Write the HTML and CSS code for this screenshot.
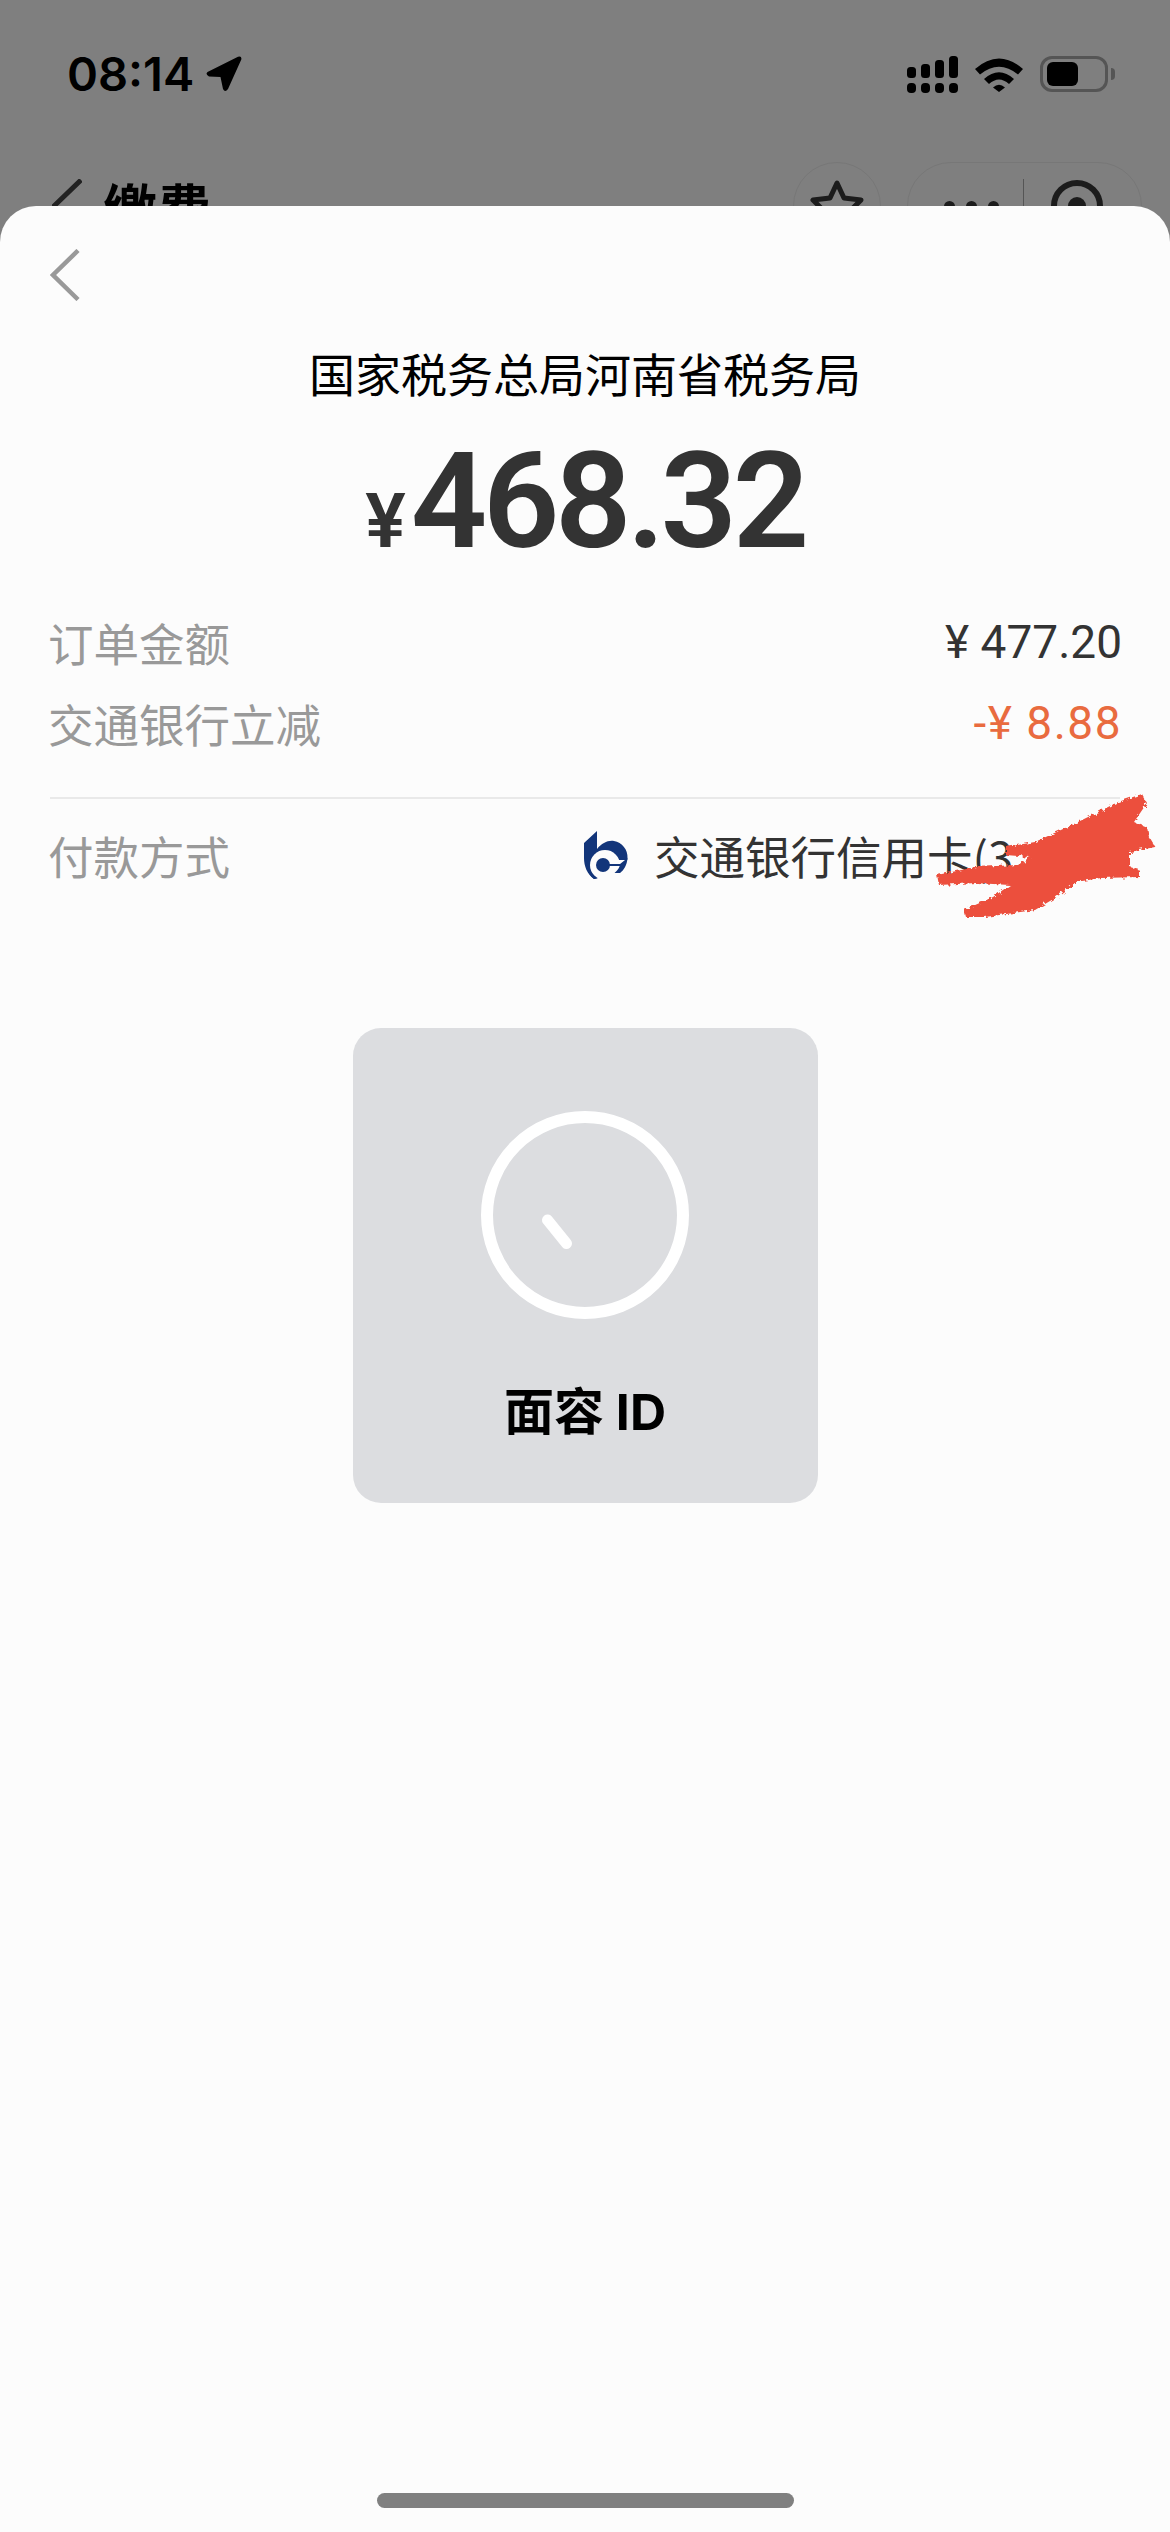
FILE: index.html

```html
<!DOCTYPE html>
<html lang="zh-CN">

<head>
  <meta charset="UTF-8" />
  <meta name="viewport" content="width=device-width, initial-scale=1" />
  <title>面容 ID 支付</title>
  <link rel="stylesheet" href="styles.css">
</head>

<body>
  <div class="phone">
    <div class="behind">
      <div class="status-bar">
        <div class="clock">
          <span class="time">08:14</span>
          <svg class="arrow" viewBox="0 0 36 36" width="36" height="36">
            <path d="M1.500 16 L32 0.800 Q36 -0.500 35.300 3.500 L22 33 Q19 37 17 33 L14.500 21 L3 20.500 Q-1 18.500 1.500 16 Z" />
          </svg>
        </div>
        <div class="status-icons">
          <svg viewBox="0 0 51 37" width="51" height="37">
            <rect x="0" y="11" width="9" height="11" rx="3.500" />
            <rect x="14" y="8" width="9" height="14" rx="3.500" />
            <rect x="28" y="4" width="9" height="18" rx="3.500" />
            <rect x="42" y="0" width="9" height="22" rx="3.500" />
            <rect x="0" y="27" width="9" height="10" rx="4" />
            <rect x="14" y="27" width="9" height="10" rx="4" />
            <rect x="28" y="27" width="9" height="10" rx="4" />
            <rect x="42" y="27" width="9" height="10" rx="4" />
          </svg>
          <svg class="wifi" viewBox="0 0 48 36" width="48" height="36">
            <path d="M0 13 Q24 -8 48 13 L43 18.500 Q24 3 5 18.500 Z" />
            <path d="M9 23 Q24 9.500 39 23 L34 28 Q24 19 14 28 Z" />
            <path d="M18 31.500 Q24 26 30 31.500 L24 36 Z" />
          </svg>
          <div class="battery">
            <div class="battery-level"></div>
          </div>
          <div class="battery-nub"></div>
        </div>
      </div>
      <div class="nav">
        <svg class="nav-back" viewBox="0 0 30 54" width="30" height="54">
          <path d="M29 1 L2 27 L29 53" />
        </svg>
        <span class="nav-title">缴费</span>
        <div class="star-btn">
          <svg viewBox="0 0 56 52" width="56" height="52">
            <path d="M28 3 L35 18 L52 20 L40 32 L44 49 L28 40 L12 49 L16 32 L4 20 L21 18 Z" />
          </svg>
        </div>
        <div class="capsule">
          <div class="dots">
            <span></span>
            <span></span>
            <span></span>
          </div>
          <div class="capsule-line"></div>
          <div class="target">
            <div class="target-dot"></div>
          </div>
        </div>
      </div>
    </div>

    <div class="sheet">
      <svg class="sheet-back" viewBox="0 0 30 52" width="30" height="52">
        <path d="M28 1.500 L3 26 L28 50.500" />
      </svg>

      <h1 class="payee">国家税务总局河南省税务局</h1>
      <div class="amount"><span class="yen">¥</span>468.32</div>

      <div class="price-rows">
        <div class="row">
          <span class="label">订单金额</span>
          <span class="value">¥ 477.20</span>
        </div>
        <div class="row">
          <span class="label">交通银行立减</span>
          <span class="value discount">-¥ 8.88</span>
        </div>
      </div>

      <div class="pay-row">
        <span class="label">付款方式</span>
        <div class="card-info">
          <svg class="bank-logo" viewBox="14 11 44 48" width="44" height="48">
            <path class="logo-blue" d="M14 23 L27 11 V29 C32 23 38 20 44 21 C52 22 58 30 57.500 38 C57 45 54 50 50 53 L24 59 C17 54 14 46 14 38 Z" />
            <circle class="logo-white" cx="35" cy="45" r="15" />
            <path class="logo-white" d="M44 40 H60 V60 H30 V58 L44 50 Z" />
            <path class="logo-blue" d="M18 47 C20 53 24 56 27 58.500 L24 59 C20 56 18 52 18 47 Z" />
            <path class="logo-blue" d="M50 44 H38 V46 H50 Z" />
            <path class="logo-blue" d="M50 44 L57.500 38 C57 45 54 50 50 53 L44.500 53 C48 50 50 47 50 44 Z" />
            <circle class="logo-blue" cx="33" cy="45" r="7" />
          </svg>
          <span class="card-name">交通银行信用卡(3</span>
        </div>
        <svg class="scribble" viewBox="0 0 226 130" width="226" height="130">
          <filter id="rough" x="-10%" y="-10%" width="120%" height="120%">
            <feTurbulence type="fractalNoise" baseFrequency="0.25" numOctaves="2" seed="4" />
            <feDisplacementMap in="SourceGraphic" scale="6" />
          </filter>
          <path filter="url(#rough)" d="M207 1 L212 10 L199 29 L212 34 L214 44 L220 54 L195 59 L195 74 L205 77 L205 84 L166 85 L141 89 L120 105 L100 117 L50 124 L31 124 L29 117 L58 104 L75 92 L41 90 L4 92 L2 82 L41 74 L83 72 L95 64 L71 62 L71 54 L100 49 L141 30 L183 9 Z" />
        </svg>
      </div>

      <div class="face-card">
        <svg class="face-ring" viewBox="0 0 208 208" width="208" height="208">
          <circle cx="104" cy="104" r="98" />
          <path d="M66.500 109 L85.500 132.500" />
        </svg>
        <div class="face-text">面容 ID</div>
      </div>

      <div class="home-bar"></div>
    </div>
  </div>
</body>

</html>
```

FILE: styles.css

```css
* {
  box-sizing: border-box;
}

body {
  margin: 0;
  background-color: #7f7f7f;
  font-family: "Noto Sans CJK SC", "Noto Sans", sans-serif;
}

.phone {
  display: flex;
  flex-direction: column;
  width: 1170px;
  height: 2532px;
  overflow: hidden;
}

/* page dimmed behind the sheet */
.behind {
  height: 206px;
  overflow: hidden;
  flex-shrink: 0;
}

.status-bar {
  display: flex;
  justify-content: space-between;
  align-items: flex-start;
  height: 162px;
  padding: 55px 55px 0 67px;
}

.clock {
  display: flex;
  align-items: center;
  gap: 12px;
  height: 38px;
}

.time {
  font-family: Inter, sans-serif;
  font-size: 47px;
  font-weight: 600;
  line-height: 38px;
  color: #000;
}

.arrow {
  fill: #000;
}

.status-icons {
  display: flex;
  align-items: center;
  height: 38px;
}

.status-icons svg {
  fill: #000;
}

.wifi {
  margin-left: 17px;
}

.battery {
  width: 68px;
  height: 36px;
  margin-left: 17px;
  padding: 3px 4px;
  border: 3px solid #555;
  border-radius: 12px;
}

.battery-level {
  width: 31px;
  height: 24px;
  background-color: #000;
  border-radius: 6px;
}

.battery-nub {
  width: 4px;
  height: 12px;
  margin-left: 3px;
  background-color: #555;
  border-radius: 0 6px 6px 0;
}

.nav {
  display: flex;
  align-items: center;
  height: 88px;
  padding-left: 52px;
}

.nav-back {
  fill: none;
  stroke: #222;
  stroke-width: 5;
}

.nav-title {
  margin-left: 21px;
  font-size: 54px;
  font-weight: 700;
  color: #000;
}

.star-btn {
  display: flex;
  justify-content: center;
  align-items: center;
  width: 88px;
  height: 88px;
  margin-left: auto;
  border: 1px solid #777;
  border-radius: 50%;
}

.star-btn svg {
  fill: none;
  stroke: #1c1c1c;
  stroke-width: 5;
  stroke-linejoin: round;
}

.capsule {
  display: flex;
  align-items: center;
  width: 235px;
  height: 88px;
  margin: 0 28px 0 26px;
  border: 1px solid #777;
  border-radius: 44px;
}

.dots {
  display: flex;
  gap: 11px;
  margin-left: 36px;
}

.dots span {
  width: 11px;
  height: 11px;
  background-color: #1c1c1c;
  border-radius: 50%;
}

.capsule-line {
  width: 1px;
  height: 54px;
  margin-left: 24px;
  background-color: #555;
}

.target {
  display: flex;
  justify-content: center;
  align-items: center;
  width: 52px;
  height: 52px;
  margin-left: 27px;
  border: 6px solid #1c1c1c;
  border-radius: 50%;
}

.target-dot {
  width: 18px;
  height: 18px;
  background-color: #1c1c1c;
  border-radius: 50%;
}

/* payment sheet */
.sheet {
  display: flex;
  flex-direction: column;
  flex: 1;
  position: relative;
  padding: 43px 50px 24px;
  background-color: #fcfcfc;
  border-radius: 36px 36px 0 0;
}

.sheet-back {
  fill: none;
  stroke: #999;
  stroke-width: 4.5;
}

.payee {
  margin: 41px 0 0;
  font-size: 46px;
  font-weight: 400;
  line-height: 60px;
  text-align: center;
  color: #000;
}

.amount {
  margin-top: 30px;
  font-family: Roboto, sans-serif;
  font-size: 134px;
  font-weight: 600;
  line-height: 140px;
  letter-spacing: -4.500px;
  text-align: center;
  color: #333;
}

.yen {
  margin-right: 5px;
  font-size: 76px;
  letter-spacing: 0;
}

.price-rows {
  margin-top: 10px;
  padding-bottom: 34px;
  border-bottom: 2px solid #e9e9e9;
}

.row {
  display: flex;
  justify-content: space-between;
  align-items: center;
  height: 81px;
}

.label {
  margin-left: -2px;
  font-size: 45.500px;
  color: #999;
}

.value {
  margin-right: -2px;
  font-family: Roboto, "Noto Sans CJK SC", sans-serif;
  font-size: 46px;
  color: #333;
}

.discount {
  letter-spacing: 1.500px;
  color: #e96b3f;
}

.pay-row {
  display: flex;
  justify-content: space-between;
  align-items: center;
  position: relative;
  height: 118px;
  padding-bottom: 6px;
}

.card-info {
  display: flex;
  align-items: center;
  gap: 26px;
  width: 536px;
}

.logo-blue {
  fill: #12357a;
}

.logo-white {
  fill: #fcfcfc;
}

.card-name {
  font-size: 45.500px;
  color: #333;
  white-space: nowrap;
}

/* hand drawn redaction over the card number */
.scribble {
  position: absolute;
  left: 885px;
  top: -6px;
  fill: #ec4f3e;
}

.face-card {
  display: flex;
  flex-direction: column;
  align-items: center;
  flex-shrink: 0;
  width: 465px;
  height: 475px;
  margin: 111px auto 0;
  padding-top: 83px;
  background-color: #dcdde0;
  border-radius: 28px;
}

.face-ring {
  fill: none;
  stroke: #fff;
  stroke-width: 12;
  stroke-linecap: round;
}

.face-ring path {
  stroke-width: 11;
}

.face-text {
  margin-top: 63px;
  font-family: Inter, "Noto Sans CJK SC", sans-serif;
  font-size: 50px;
  font-weight: 700;
  line-height: 60px;
  color: #000;
}

.home-bar {
  width: 417px;
  height: 15px;
  margin: auto auto 0;
  background-color: #808080;
  border-radius: 8px;
}
```
